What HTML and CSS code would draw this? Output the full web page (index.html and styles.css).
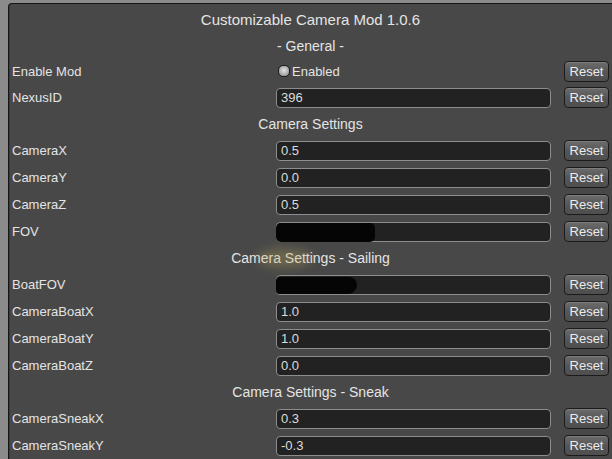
FILE: index.html
```html
<!DOCTYPE html>
<html lang="en">
<head>
  <meta charset="UTF-8">
  <title>Customizable Camera Mod</title>
  <link rel="stylesheet" href="styles.css">
</head>
<body>
  <div class="window">
    <div class="title">Customizable Camera Mod 1.0.6</div>
    <div class="section first">- General -</div>

    <div class="row short">
      <span class="label">Enable Mod</span>
      <label class="toggle"><span class="dot"></span>Enabled</label>
      <button class="reset">Reset</button>
    </div>
    <div class="row">
      <span class="label">NexusID</span>
      <div class="field">396</div>
      <button class="reset">Reset</button>
    </div>

    <div class="section">Camera Settings</div>
    <div class="row">
      <span class="label">CameraX</span>
      <div class="field">0.5</div>
      <button class="reset">Reset</button>
    </div>
    <div class="row">
      <span class="label">CameraY</span>
      <div class="field">0.0</div>
      <button class="reset">Reset</button>
    </div>
    <div class="row">
      <span class="label">CameraZ</span>
      <div class="field">0.5</div>
      <button class="reset">Reset</button>
    </div>
    <div class="row">
      <span class="label">FOV</span>
      <div class="field"><span class="hidden wide"></span></div>
      <button class="reset">Reset</button>
    </div>

    <div class="section"><span class="smudge"></span>Camera Settings - Sailing</div>
    <div class="row">
      <span class="label">BoatFOV</span>
      <div class="field"><span class="hidden narrow"></span></div>
      <button class="reset">Reset</button>
    </div>
    <div class="row">
      <span class="label">CameraBoatX</span>
      <div class="field">1.0</div>
      <button class="reset">Reset</button>
    </div>
    <div class="row">
      <span class="label">CameraBoatY</span>
      <div class="field">1.0</div>
      <button class="reset">Reset</button>
    </div>
    <div class="row">
      <span class="label">CameraBoatZ</span>
      <div class="field">0.0</div>
      <button class="reset">Reset</button>
    </div>

    <div class="section">Camera Settings - Sneak</div>
    <div class="row">
      <span class="label">CameraSneakX</span>
      <div class="field">0.3</div>
      <button class="reset">Reset</button>
    </div>
    <div class="row">
      <span class="label">CameraSneakY</span>
      <div class="field">-0.3</div>
      <button class="reset">Reset</button>
    </div>
  </div>
</body>
</html>
```

FILE: styles.css
```css
* { box-sizing: border-box; }

html, body { height: 100%; }

body {
  margin: 0;
  background: #8b8b8b;
  color: #e4e4e4;
  font-family: "Liberation Sans", Arial, sans-serif;
  font-size: 13px;
  overflow: hidden;
}

.window {
  margin: 3px 0 0 8px;
  min-height: 100%;
  background: #484848;
  border: 1px solid #161616;
  border-right: none;
  border-bottom: none;
  border-top-left-radius: 4px;
  padding: 0 0 0 3px;
  box-shadow: inset 1px 0 0 #3a3a3a;
}

.title {
  height: 30px;
  line-height: 32px;
  font-size: 15px;
  text-align: center;
  padding-right: 3px;
}

.section {
  position: relative;
  height: 26px;
  line-height: 26px;
  font-size: 14px;
  text-align: center;
  padding-right: 3px;
}
.section.first { height: 24px; line-height: 24px; }

/* left-over paint blur from an image edit */
.smudge {
  position: absolute;
  left: 245px;
  top: 3px;
  width: 55px;
  height: 20px;
  border-radius: 50%;
  background: rgba(190, 170, 90, 0.3);
  filter: blur(5px);
}

.row {
  display: grid;
  grid-template-columns: 264px 275px 58px;
  align-items: center;
  height: 27px;
}
.row.short { height: 26px; }

.label { color: #e4e4e4; }

.field {
  position: relative;
  height: 20px;
  line-height: 18px;
  padding: 0 4px;
  background: #222;
  border: 1px solid #8d8d8d;
  border-radius: 4px;
  color: #dcdcdc;
}

.hidden {
  position: absolute;
  left: -1px;
  top: 0;
  height: 19px;
  background: #050505;
  border-radius: 5px;
}
.hidden.wide { width: 99px; }
.hidden.narrow {
  width: 81px;
  top: 1px;
  height: 17px;
  border-radius: 4px 8px 9px 4px;
}

.toggle {
  display: flex;
  align-items: center;
  gap: 2px;
  color: #e4e4e4;
  margin-left: 2px;
}
.dot {
  width: 12px;
  height: 12px;
  border-radius: 5px;
  border: 1px solid #1c1c1c;
  background: radial-gradient(circle at 50% 45%, #e2e2e2 0, #b9b9b9 45%, #7a7a7a 100%);
}

.reset {
  justify-self: end;
  height: 21px;
  width: 45px;
  padding: 0;
  font-family: inherit;
  font-size: 13px;
  color: #ececec;
  background: linear-gradient(#6c6c6c, #555 55%, #4e4e4e);
  border: 1px solid #1b1b1b;
  border-radius: 4px;
  box-shadow: inset 0 1px 0 #7c7c7c;
}
```
